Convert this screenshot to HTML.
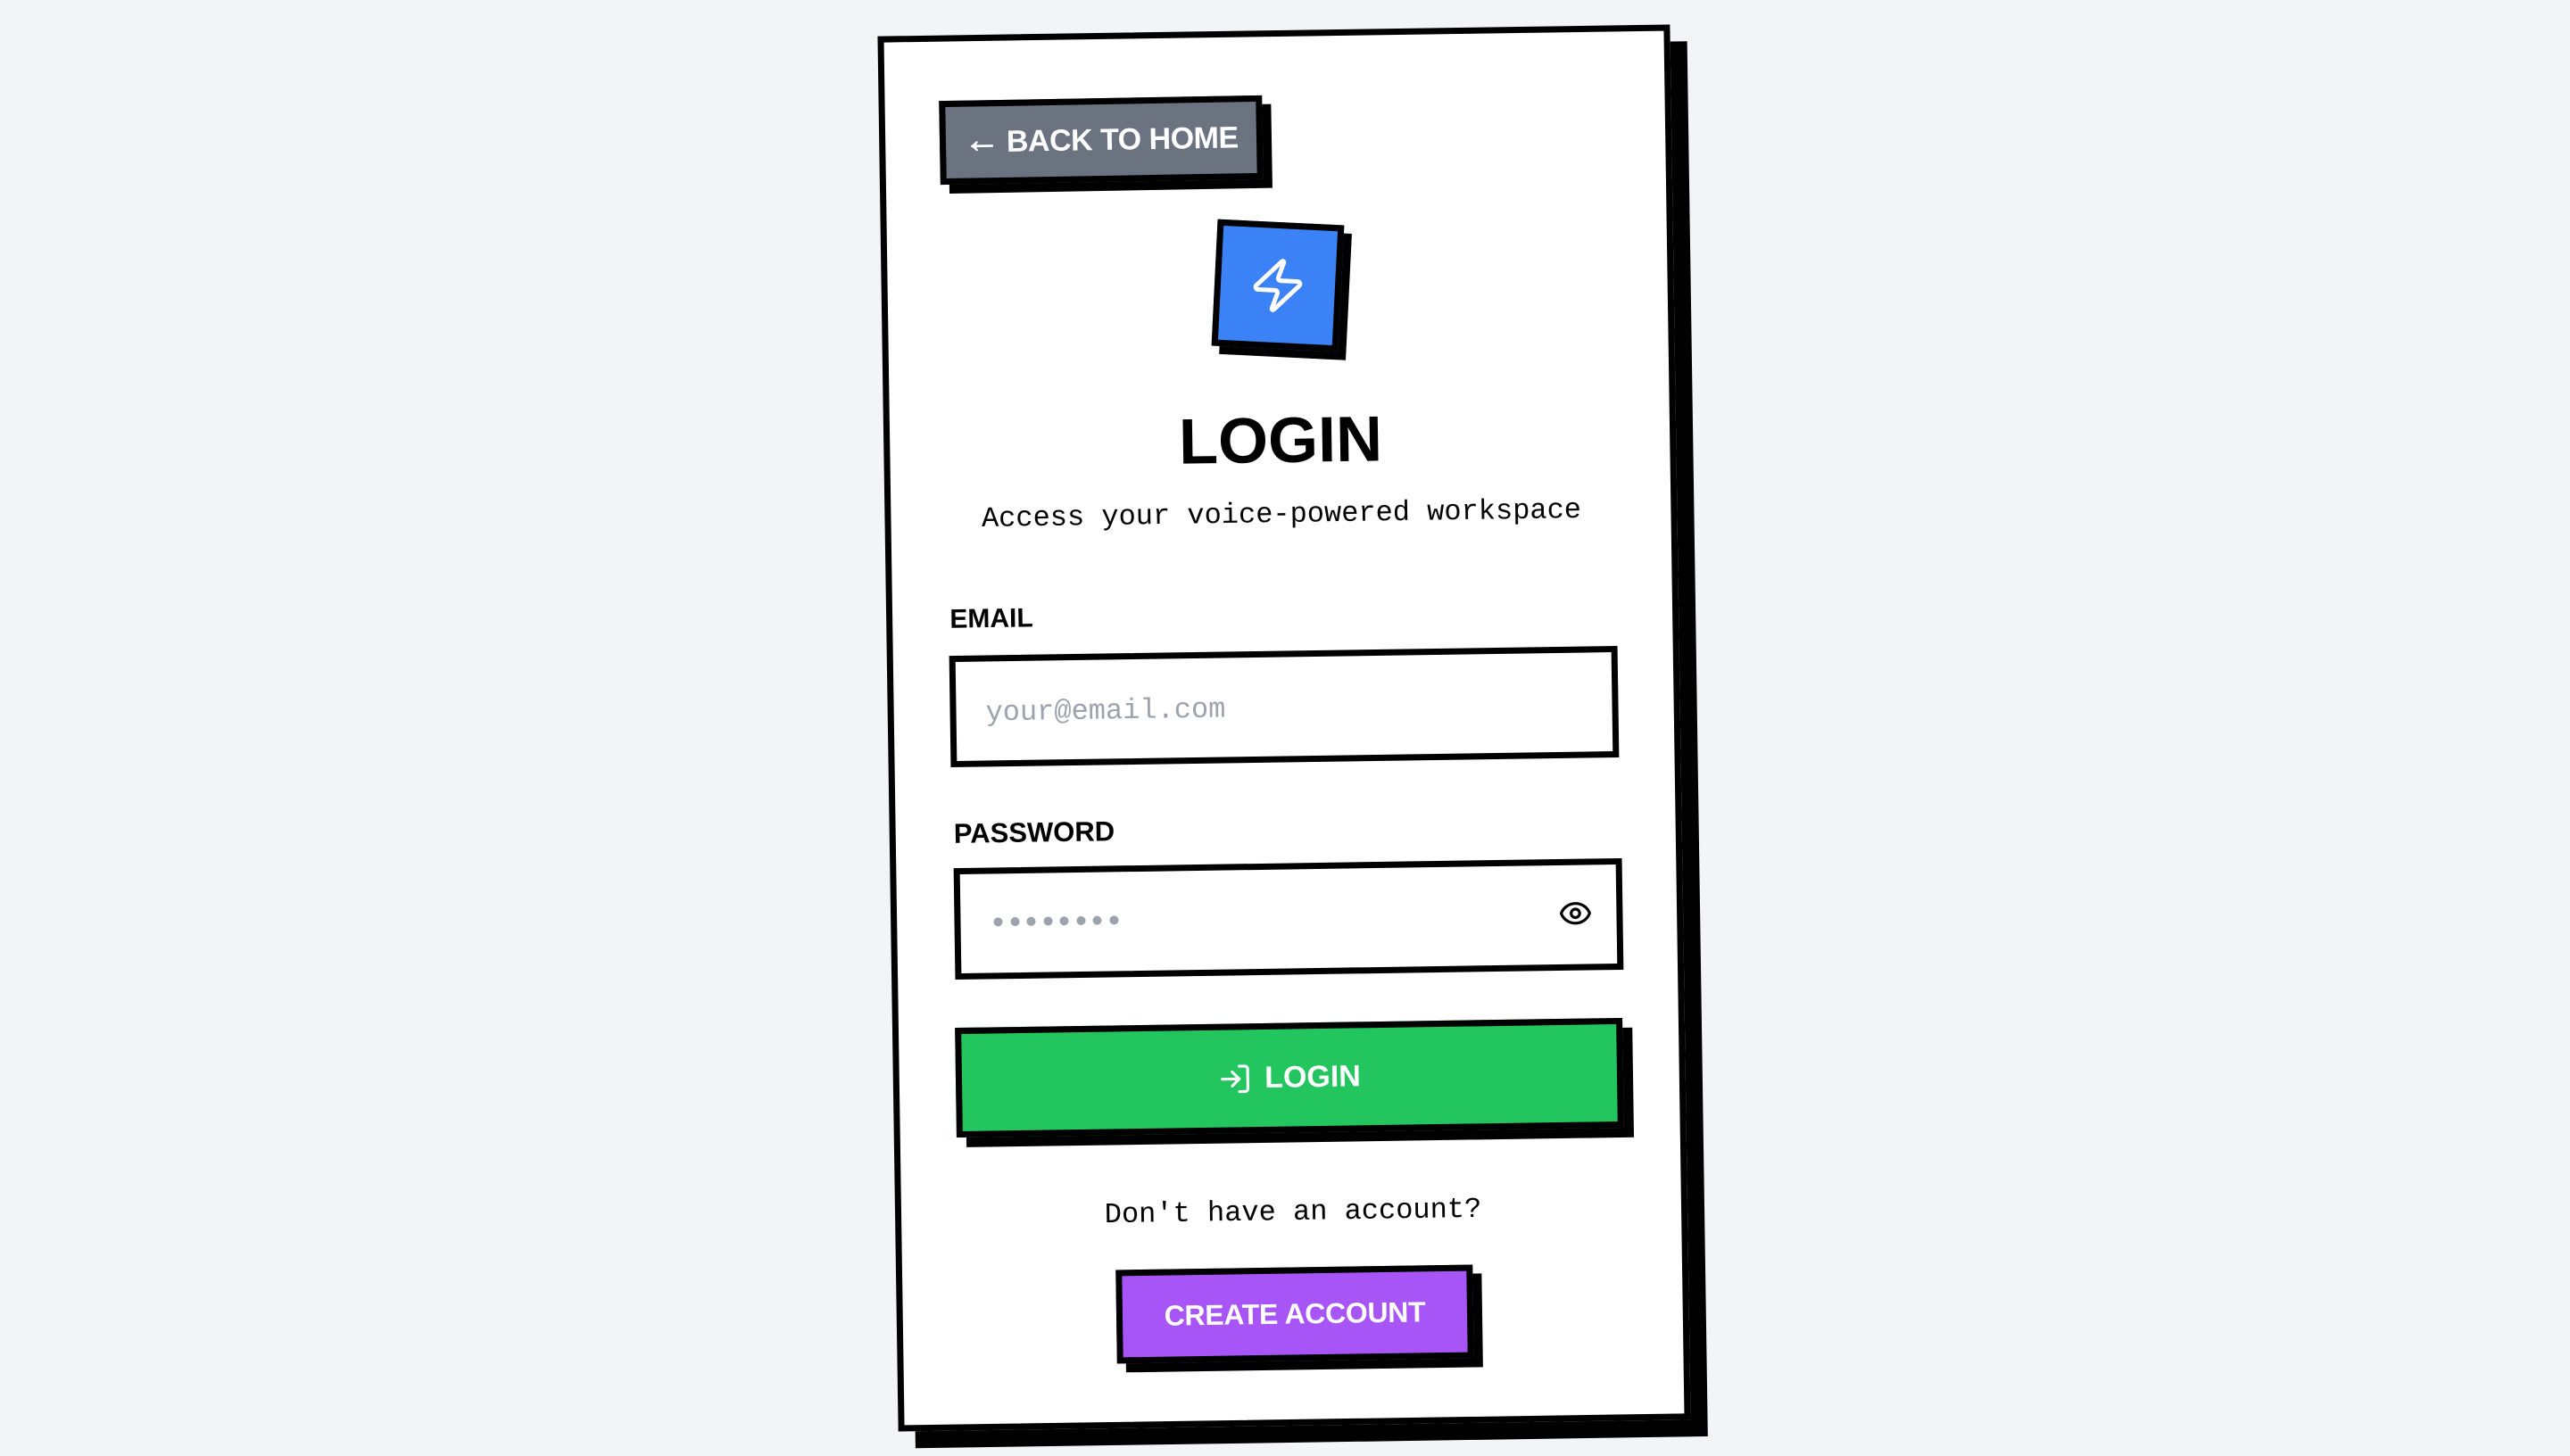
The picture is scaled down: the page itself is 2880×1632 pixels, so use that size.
<!DOCTYPE html>
<html><head><meta charset="utf-8"><style>
html,body{margin:0;padding:0}
body{width:2880px;height:1632px;background:#f3f4f6;position:relative;overflow:hidden;font-family:"Liberation Sans",Arial,sans-serif}
.a{position:absolute;transform:translate(-50%,-50%) rotate(-0.85deg);box-sizing:border-box}
.mono{font-family:"Liberation Mono","DejaVu Sans Mono",monospace}
.flex{display:flex;align-items:center;justify-content:center}
</style></head><body>
<div class="a" style="left:1439px;top:816px;width:888px;height:1564px;background:#fff;border:7px solid #000;box-shadow:19px 19px 0 #000"></div>

<div class="a flex" style="left:1234px;top:157px;width:362px;height:94px;background:#6b7280;border:7px solid #000;box-shadow:10px 10px 0 #000;color:#fff;font-weight:bold;font-size:34px;letter-spacing:-0.5px;gap:8px;transform:translate(-50%,-50%) rotate(-1deg)"><span style="font-size:40px;margin-top:-4px;-webkit-text-stroke:1px #fff">←</span>BACK TO HOME</div>

<div class="a flex" style="left:1432px;top:320px;width:142px;height:142px;background:#3b82f6;border:7px solid #000;box-shadow:9px 9px 0 #000;transform:translate(-50%,-50%) rotate(2.8deg)">
<svg width="66" height="66" viewBox="0 0 24 24" fill="none" stroke="#fff" stroke-width="1.8" stroke-linecap="round" stroke-linejoin="round"><path d="M4 14a1 1 0 0 1-.78-1.63l9.9-10.2a.5.5 0 0 1 .86.46l-1.92 6.02A1 1 0 0 0 13 10h7a1 1 0 0 1 .78 1.63l-9.9 10.2a.5.5 0 0 1-.86-.46l1.92-6.02A1 1 0 0 0 11 14z"/></svg></div>

<div class="a" style="left:1435px;top:494px;font-size:72px;font-weight:bold;white-space:nowrap;line-height:1">LOGIN</div>
<div class="a mono" style="left:1436px;top:577px;font-size:32px;white-space:nowrap;line-height:1">Access your voice-powered workspace</div>

<div class="a" style="left:1111px;top:694px;font-size:30px;font-weight:bold;line-height:1">EMAIL</div>
<div class="a" style="left:1439px;top:792px;width:749px;height:125px;border:7px solid #000;background:#fff">
<div class="mono" style="position:absolute;left:33px;top:39px;font-size:32px;color:#9ca3af">your@email.com</div></div>

<div class="a" style="left:1159px;top:933px;font-size:31px;font-weight:bold;line-height:1">PASSWORD</div>
<div class="a" style="left:1444px;top:1030px;width:749px;height:125px;border:7px solid #000;background:#fff">
<div style="position:absolute;left:37px;top:49px;display:flex;gap:8.5px">
<i style="width:10px;height:10px;border-radius:50%;background:#9ca3af"></i><i style="width:10px;height:10px;border-radius:50%;background:#9ca3af"></i><i style="width:10px;height:10px;border-radius:50%;background:#9ca3af"></i><i style="width:10px;height:10px;border-radius:50%;background:#9ca3af"></i><i style="width:10px;height:10px;border-radius:50%;background:#9ca3af"></i><i style="width:10px;height:10px;border-radius:50%;background:#9ca3af"></i><i style="width:10px;height:10px;border-radius:50%;background:#9ca3af"></i><i style="width:10px;height:10px;border-radius:50%;background:#9ca3af"></i></div>
<svg style="position:absolute;right:27px;top:35px" width="38" height="38" viewBox="0 0 24 24" fill="none" stroke="#000" stroke-width="2" stroke-linecap="round" stroke-linejoin="round"><path d="M2.062 12.348a1 1 0 0 1 0-.696 10.75 10.75 0 0 1 19.876 0 1 1 0 0 1 0 .696 10.75 10.75 0 0 1-19.876 0"/><circle cx="12" cy="12" r="3"/></svg></div>

<div class="a flex" style="left:1445px;top:1208px;width:748px;height:123px;background:#22c55e;border:7px solid #000;box-shadow:11px 11px 0 #000;color:#fff;font-weight:bold;font-size:34px;gap:14px">
<svg width="38" height="38" viewBox="0 0 24 24" fill="none" stroke="#fff" stroke-width="2" stroke-linecap="round" stroke-linejoin="round"><path d="M15 3h4a2 2 0 0 1 2 2v14a2 2 0 0 1-2 2h-4"/><polyline points="10 17 15 12 10 7"/><line x1="15" y1="12" x2="3" y2="12"/></svg>LOGIN</div>

<div class="a mono" style="left:1449px;top:1359px;font-size:32px;white-space:nowrap;line-height:1">Don't have an account?</div>

<div class="a flex" style="left:1451px;top:1473px;width:400px;height:105px;background:#a855f7;border:7px solid #000;box-shadow:10px 10px 0 #000;color:#fff;font-weight:bold;font-size:32px;letter-spacing:-0.3px">CREATE ACCOUNT</div>
</body></html>
